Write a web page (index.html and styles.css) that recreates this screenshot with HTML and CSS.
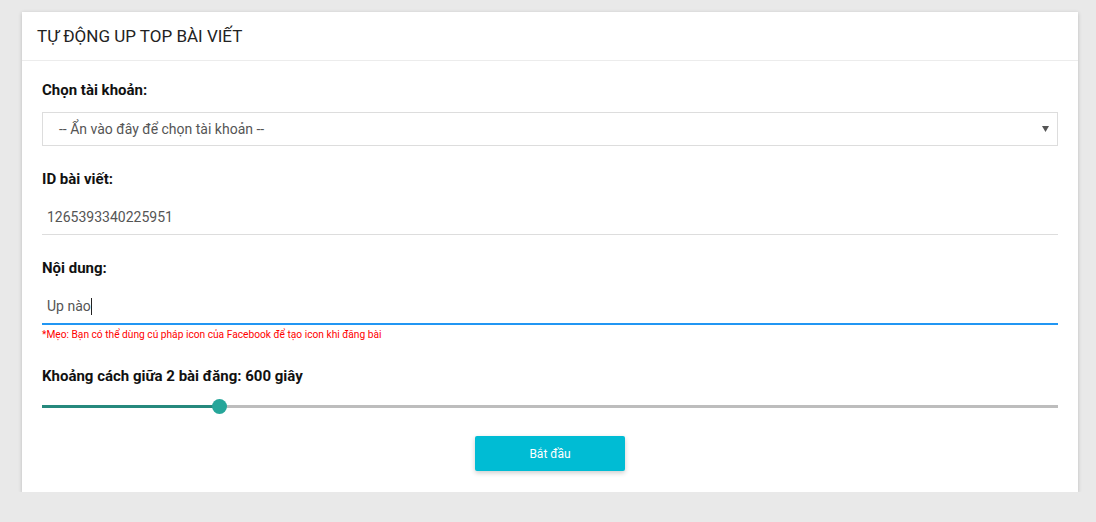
FILE: index.html
```html
<!DOCTYPE html>
<html lang="vi">
<head>
<meta charset="utf-8">
<title>Tự động up top bài viết</title>
<link rel="stylesheet" href="styles.css">
</head>
<body>
<div class="card">
  <div class="card-header">TỰ ĐỘNG UP TOP BÀI VIẾT</div>
  <div class="card-body">
    <div class="label">Chọn tài khoản:</div>
    <div class="select">
      <span class="select-text">-- Ẩn vào đây để chọn tài khoản --</span>
      <svg class="select-arrow" width="7" height="6" viewBox="0 0 7 6"><path d="M0 0H7L3.5 6Z" fill="#555"/></svg>
    </div>

    <div class="label gap">ID bài viết:</div>
    <div class="input">1265393340225951</div>

    <div class="label gap">Nội dung:</div>
    <div class="input active">Up nào<span class="caret"></span></div>
    <div class="hint">*Mẹo: Bạn có thể dùng cú pháp icon của Facebook để tạo icon khi đăng bài</div>

    <div class="label gap2">Khoảng cách giữa 2 bài đăng: 600 giây</div>
    <div class="slider">
      <div class="track">
        <div class="fill" style="width:177px"></div>
        <div class="thumb" style="left:177px"></div>
      </div>
    </div>

    <div class="actions">
      <button class="btn">Bắt đầu</button>
    </div>
  </div>
</div>
</body>
</html>
```
FILE: styles.css
```css
html, body {
  margin: 0;
  padding: 0;
}
body {
  background: #e9e9e9;
  font-family: Roboto, "Liberation Sans", Arial, sans-serif;
  padding: 12px 18px 0 22px;
}
.card {
  width: 1056px;
  background: #fff;
  box-shadow: 0 1px 4px rgba(0, 0, 0, 0.2);
}
.card-header {
  height: 48px;
  line-height: 48px;
  padding-left: 15px;
  font-size: 17px;
  color: #222;
  border-bottom: 1px solid #ececec;
}
.card-body {
  padding: 20px 20px 21px 20px;
}
.label {
  font-size: 15px;
  font-weight: 700;
  line-height: 18px;
  color: #111;
}
.label.gap {
  margin-top: 24px;
}
.label.gap2 {
  margin-top: 26px;
}
.select {
  margin-top: 13px;
  height: 32px;
  border: 1px solid #ddd;
  display: flex;
  align-items: center;
  justify-content: space-between;
  padding: 0 8px 0 16px;
}
.select-text {
  font-size: 14px;
  color: #555;
}
.select-arrow {
  display: block;
}
.input {
  margin-top: 12px;
  height: 34px;
  line-height: 34px;
  border-bottom: 1px solid #ddd;
  padding-left: 5px;
  font-size: 14px;
  color: #555;
}
.input.active {
  border-bottom: 2px solid #2196f3;
}
.caret {
  display: inline-block;
  width: 1px;
  height: 17px;
  background: #222;
  vertical-align: -4px;
}
.hint {
  margin-top: 4px;
  font-size: 10.2px;
  line-height: 12px;
  color: #f00;
}
.slider {
  margin-top: 11px;
  height: 20px;
  display: flex;
  align-items: center;
}
.track {
  position: relative;
  width: 100%;
  height: 3px;
  background: #bdbdbd;
}
.fill {
  height: 3px;
  background: #26897d;
}
.thumb {
  position: absolute;
  top: -6px;
  width: 15px;
  height: 15px;
  margin-left: -7px;
  border-radius: 50%;
  background: #26a69a;
}
.actions {
  margin-top: 20px;
  display: flex;
  justify-content: center;
}
.btn {
  width: 150px;
  height: 35px;
  border: none;
  border-radius: 2px;
  background: #00bcd4;
  color: #fff;
  font-family: Roboto, "Liberation Sans", Arial, sans-serif;
  font-size: 12px;
  box-shadow: 0 2px 5px rgba(0, 0, 0, 0.2);
  padding: 0;
}
```
